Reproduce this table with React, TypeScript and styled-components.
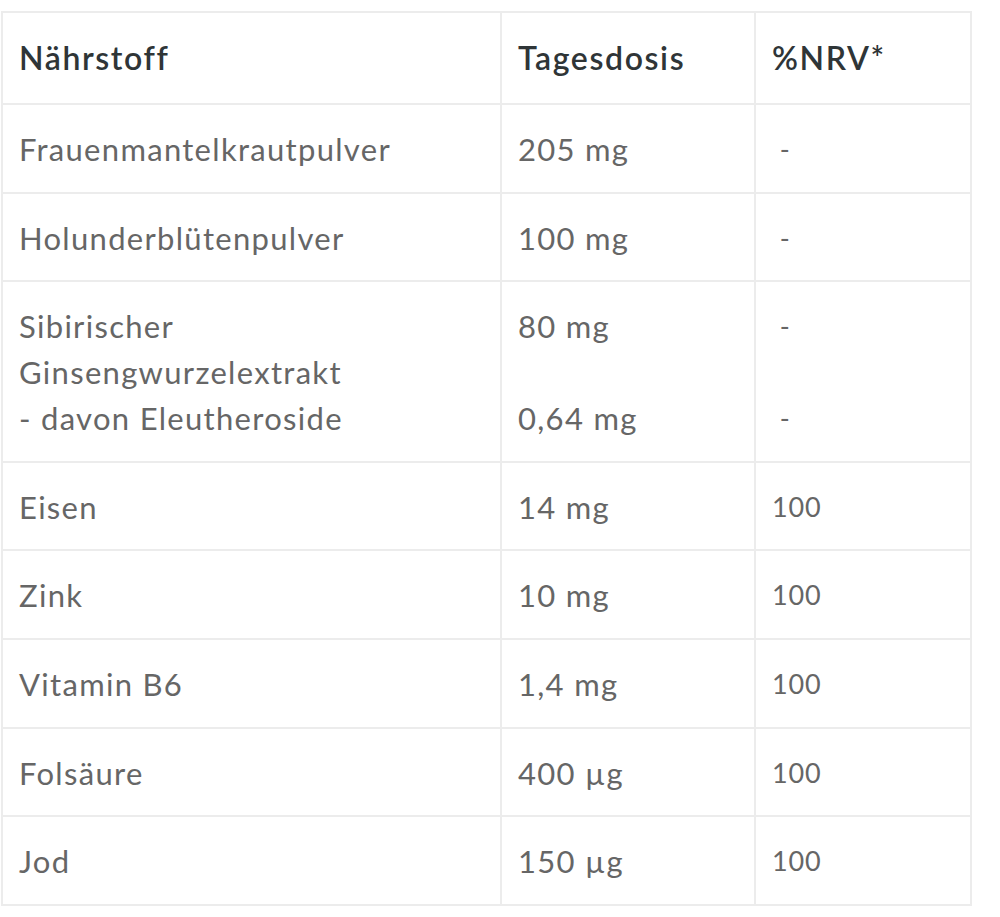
import styled, { createGlobalStyle } from "styled-components";

type Row = {
  name: string[];
  dose: string[];
  nrv: string[];
};

const rows: Row[] = [
  { name: ["Frauenmantelkrautpulver"], dose: ["205 mg"], nrv: ["\u00a0-"] },
  { name: ["Holunderblütenpulver"], dose: ["100 mg"], nrv: ["\u00a0-"] },
  {
    name: ["Sibirischer", "Ginsengwurzelextrakt", "- davon Eleutheroside"],
    dose: ["80 mg", "", "0,64 mg"],
    nrv: ["\u00a0-", "", "\u00a0-"],
  },
  { name: ["Eisen"], dose: ["14 mg"], nrv: ["100"] },
  { name: ["Zink"], dose: ["10 mg"], nrv: ["100"] },
  { name: ["Vitamin B6"], dose: ["1,4 mg"], nrv: ["100"] },
  { name: ["Folsäure"], dose: ["400 µg"], nrv: ["100"] },
  { name: ["Jod"], dose: ["150 µg"], nrv: ["100"] },
];

function Lines({ items }: { items: string[] }): JSX.Element {
  return (
    <>
      {items.map((line, i) => (
        <Line key={i}>{line || "\u00a0"}</Line>
      ))}
    </>
  );
}

function App(): JSX.Element {
  return (
    <>
      <GlobalStyle />
      <Page>
        <Table>
          <colgroup>
            <col style={{ width: 499 }} />
            <col style={{ width: 254 }} />
            <col style={{ width: 216 }} />
          </colgroup>
          <thead>
            <tr>
              <Head>Nährstoff</Head>
              <Head>Tagesdosis</Head>
              <Head>%NRV*</Head>
            </tr>
          </thead>
          <tbody>
            {rows.map((row) => (
              <tr key={row.name[0]}>
                <Cell>
                  <Lines items={row.name} />
                </Cell>
                <Cell>
                  <Lines items={row.dose} />
                </Cell>
                <Cell $small>
                  <Lines items={row.nrv} />
                </Cell>
              </tr>
            ))}
          </tbody>
        </Table>
      </Page>
    </>
  );
}

const GlobalStyle = createGlobalStyle`
body {
  margin: 0;
  background: #ffffff;
  font-family: Lato, "Open Sans", sans-serif;
}
`
const Page = styled.div`
padding: 11px 0 0 1px;
`
const Table = styled.table`
border-collapse: collapse;
table-layout: fixed;
width: 969px;
`
const Head = styled.th`
border: 2px solid #ececec;
padding: 22px 15px 22px 16px;
text-align: left;
font-size: 32px;
line-height: 46px;
font-weight: 600;
letter-spacing: 1.6px;
color: #2f3537;
`
const Cell = styled.td<{ $small?: boolean }>`
border: 2px solid #ececec;
padding: 21px 15px 19.6px 16px;
vertical-align: top;
font-size: ${(p) => (p.$small ? "27px" : "31px")};
line-height: 46px;
letter-spacing: ${(p) => (p.$small ? "0.8px" : "1.3px")};
color: #666666;
`
const Line = styled.div`
white-space: nowrap;
`

export default App;
